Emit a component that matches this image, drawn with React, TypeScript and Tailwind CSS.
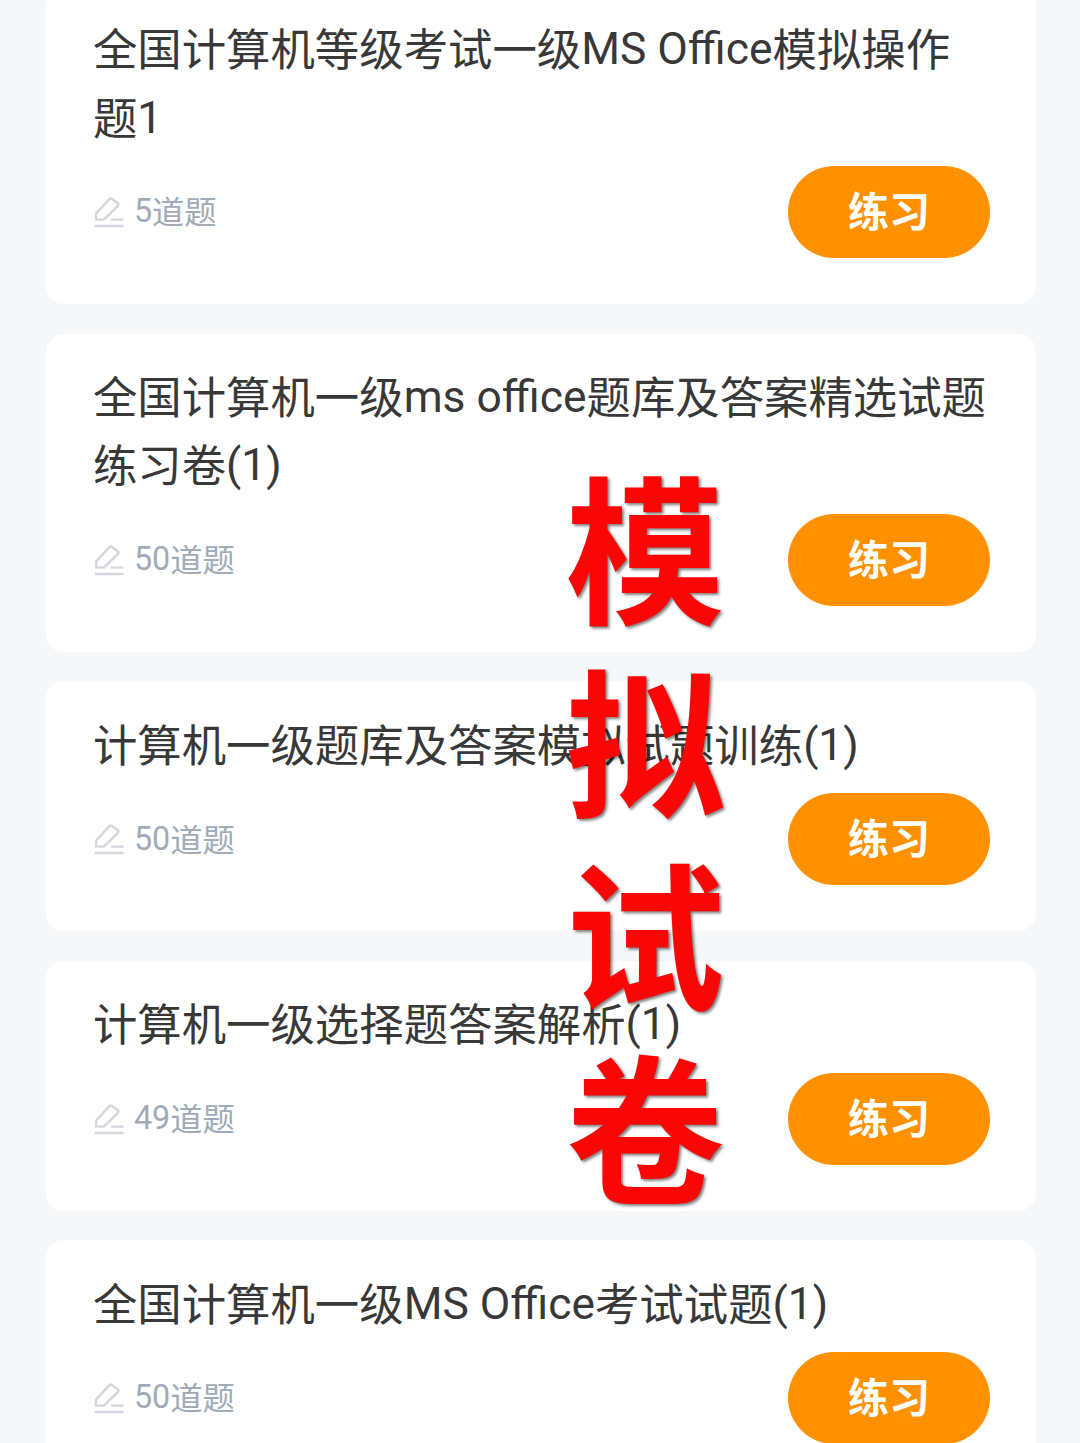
interface Paper {
  id: number;
  lines: string[];
  count: number;
}

const papers: Paper[] = [
  { id: 1, lines: ["全国计算机等级考试一级MS Office模拟操作", "题1"], count: 5 },
  { id: 2, lines: ["全国计算机一级ms office题库及答案精选试题", "练习卷(1)"], count: 50 },
  { id: 3, lines: ["计算机一级题库及答案模拟试题训练(1)"], count: 50 },
  { id: 4, lines: ["计算机一级选择题答案解析(1)"], count: 49 },
  { id: 5, lines: ["全国计算机一级MS Office考试试题(1)"], count: 50 },
];

const EditIcon = () => (
  <svg className="h-8 w-8" viewBox="0 0 32 32" fill="none" stroke="#d3d6dc" strokeWidth={2.4} strokeLinejoin="round">
    <path d="M3 23.6V17.6L16.2 3.4Q17.8 1.8 19.4 3.2L24.8 7.2Q26.2 8.4 25 9.8L10.8 23.6Z" />
    <path d="M18 23.6h12.4M1.8 30h28.6" />
  </svg>
);

// Latin runs sit a little above the Chinese baseline
function MixedText({ text }: { text: string }) {
  const parts = text.split(/([\x20-\x7e]+)/).filter(Boolean);
  return (
    <>
      {parts.map((part, index) =>
        /^[\x20-\x7e]/.test(part) ? (
          <span key={index} className="align-[2px] leading-none">
            {part}
          </span>
        ) : (
          part
        )
      )}
    </>
  );
}

function PaperCard({ paper }: { paper: Paper }) {
  return (
    <div className="shrink-0 rounded-[18px] bg-white pt-[31.5px] pr-[46px] pb-[46px] pl-[46.5px]">
      <h2 className="text-[44.4px] leading-[68.3px] whitespace-nowrap text-[#383838]">
        {paper.lines.map((line) => (
          <div key={line}>
            <MixedText text={line} />
          </div>
        ))}
      </h2>
      <div className="mt-[12.2px] flex h-[92px] items-center justify-between">
        <div className="flex items-center gap-[9px] text-[32.3px] text-[#a1abb8]">
          <EditIcon />
          <span className="pt-[3px]">
            <MixedText text={`${paper.count}道题`} />
          </span>
        </div>
        <button className="h-[92px] w-[202px] rounded-full bg-[#ff9100] pt-1 text-[41px] font-bold text-white">
          练习
        </button>
      </div>
    </div>
  );
}

function App() {
  return (
    <div className="relative h-[1443px] w-[1080px] overflow-hidden bg-[#f5f7f9] font-[Roboto,'Noto_Sans_CJK_SC',sans-serif]">
      <div className="-mt-[14.1px] flex flex-col gap-[29.4px] pr-[44px] pl-[46.4px]">
        {papers.map((paper) => (
          <PaperCard key={paper.id} paper={paper} />
        ))}
      </div>

      {/* Caption over the list */}
      <div className="absolute top-[461px] left-[565px] flex w-[160px] flex-col items-center text-[159px] leading-[193px] font-bold text-[#fb0606] [text-shadow:2px_2px_3px_rgba(0,0,0,0.5)]">
        {["模", "拟", "试", "卷"].map((char) => (
          <span key={char}>{char}</span>
        ))}
      </div>
    </div>
  );
}

export default App;
